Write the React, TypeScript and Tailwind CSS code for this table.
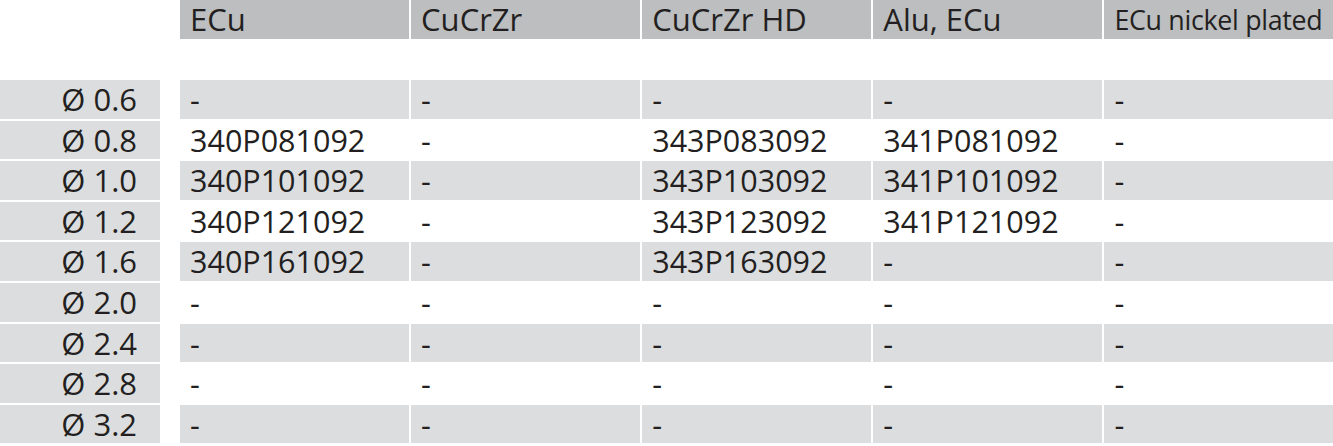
import React from "react";

const headers = ["ECu", "CuCrZr", "CuCrZr HD", "Alu, ECu", "ECu nickel plated"];

// one entry per diameter, "-" where no part exists
const rows: { size: string; parts: string[] }[] = [
  { size: "0.6", parts: ["-", "-", "-", "-", "-"] },
  { size: "0.8", parts: ["340P081092", "-", "343P083092", "341P081092", "-"] },
  { size: "1.0", parts: ["340P101092", "-", "343P103092", "341P101092", "-"] },
  { size: "1.2", parts: ["340P121092", "-", "343P123092", "341P121092", "-"] },
  { size: "1.6", parts: ["340P161092", "-", "343P163092", "-", "-"] },
  { size: "2.0", parts: ["-", "-", "-", "-", "-"] },
  { size: "2.4", parts: ["-", "-", "-", "-", "-"] },
  { size: "2.8", parts: ["-", "-", "-", "-", "-"] },
  { size: "3.2", parts: ["-", "-", "-", "-", "-"] },
];

export default function App() {
  return (
    <div className="w-[1333px] h-[446px] bg-white text-[#231f20] font-['Open_Sans',sans-serif]">
      {/* Header */}
      <div className="flex">
        <div className="w-[180px] shrink-0" />
        <div className="grid grid-cols-5 gap-x-[2.5px] flex-1">
          {headers.map((h, i) => (
            <div
              key={h}
              className={
                "h-[39px] bg-[#bcbec0] pl-[10px] leading-[39px] whitespace-nowrap " +
                (i === 4 ? "text-[26.8px] tracking-[-0.3px]" : "text-[31px]")
              }
            >
              {h}
            </div>
          ))}
        </div>
      </div>

      {/* Body */}
      <div className="mt-[41px] flex flex-col gap-y-[2px]">
        {rows.map((r, ri) => {
          const shaded = ri % 2 === 0;
          return (
            <div key={r.size} className="flex h-[38.6px]">
              <div className="w-[160px] shrink-0 bg-[#dcdddf] pr-[23px] text-right text-[31px] font-medium leading-[38.6px]">
                Ø {r.size}
              </div>
              <div className="ml-[20px] grid grid-cols-5 gap-x-[2.5px] flex-1">
                {r.parts.map((p, ci) => (
                  <div
                    key={ci}
                    className={
                      "pl-[10px] text-[30.5px] leading-[38.6px] whitespace-nowrap " +
                      (shaded ? "bg-[#dcdddf]" : "bg-white")
                    }
                  >
                    {p}
                  </div>
                ))}
              </div>
            </div>
          );
        })}
      </div>
    </div>
  );
}
